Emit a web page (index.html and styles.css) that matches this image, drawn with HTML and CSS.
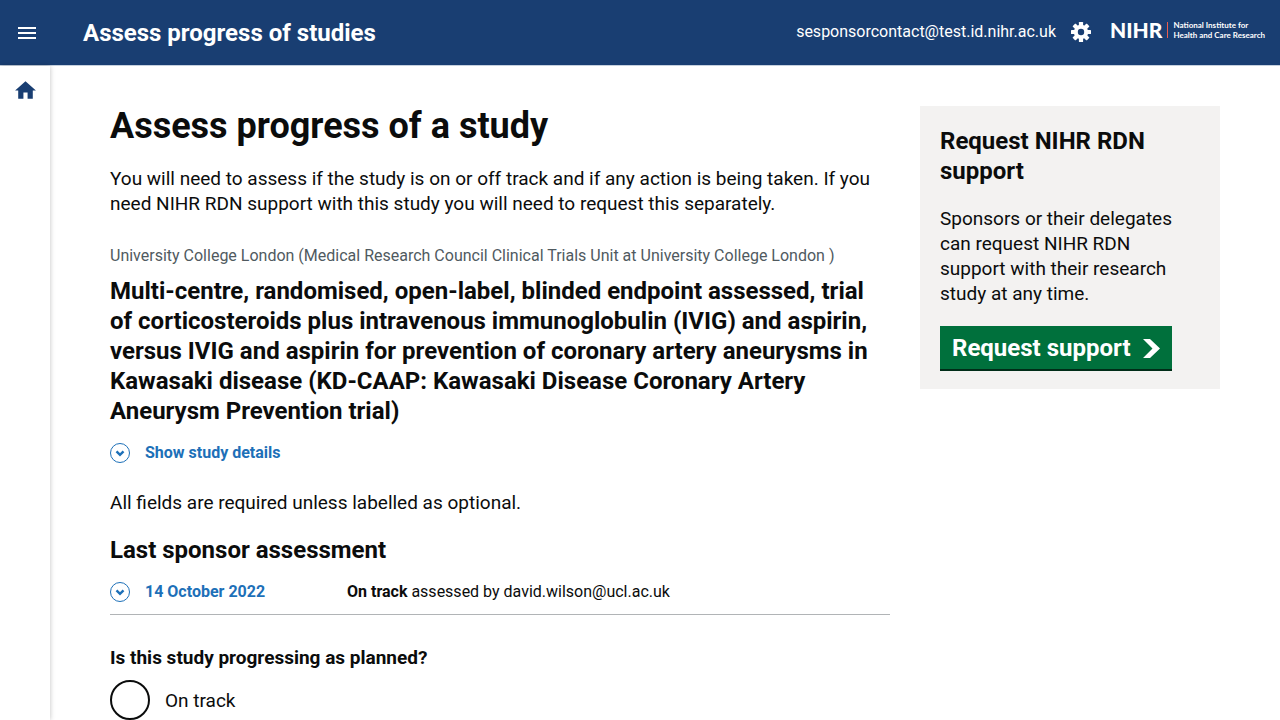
FILE: index.html
```html
<!DOCTYPE html>
<html lang="en">
<head>
<meta charset="utf-8">
<meta name="viewport" content="width=device-width, initial-scale=1">
<title>Assess progress of studies</title>
<link rel="stylesheet" href="styles.css">
</head>
<body>
<header class="header">
  <button class="menu-button" type="button" aria-label="Open menu">
    <svg width="18" height="12" viewBox="0 0 18 12" fill="currentColor"><path d="M0 0h18v2H0zM0 5h18v2H0zM0 10h18v2H0z"/></svg>
  </button>
  <div class="service-name">Assess progress of studies</div>
  <div class="account">
    <span class="account-email">sesponsorcontact@test.id.nihr.ac.uk</span>
    <button class="settings-button" type="button" aria-label="Settings">
      <svg width="20" height="20" viewBox="0 0 20 20"><g fill="currentColor"><circle cx="10" cy="10" r="7.2"/><rect x="7.900" y="0" width="4.200" height="20" rx=".6"/><rect x="7.900" y="0" width="4.200" height="20" rx=".6" transform="rotate(45 10 10)"/><rect x="7.900" y="0" width="4.200" height="20" rx=".6" transform="rotate(90 10 10)"/><rect x="7.900" y="0" width="4.200" height="20" rx=".6" transform="rotate(135 10 10)"/></g><circle class="gear-hole" cx="10" cy="10" r="3.200"/></svg>
    </button>
    <a class="logo" href="#" aria-label="National Institute for Health and Care Research">
      <span class="logo-mark">NIHR</span>
      <span class="logo-divider"></span>
      <span class="logo-name">National Institute for<br>Health and Care Research</span>
    </a>
  </div>
</header>
<div class="shell">
  <nav class="side-nav" aria-label="Main">
    <a class="home-link" href="#" aria-label="Home">
      <svg width="25" height="25" viewBox="0 0 24 24" fill="currentColor"><path d="M10 20v-6h4v6h5v-8h3L12 3 2 12h3v8z"/></svg>
    </a>
  </nav>
  <div class="page">
    <main class="main">
      <h1 class="title">Assess progress of a study</h1>
      <p class="intro">You will need to assess if the study is on or off track and if any action is being taken. If you need NIHR RDN support with this study you will need to request this separately.</p>
      <p class="organisation">University College London (Medical Research Council Clinical Trials Unit at University College London )</p>
      <h2 class="heading">Multi-centre, randomised, open-label, blinded endpoint assessed, trial of corticosteroids plus intravenous immunoglobulin (IVIG) and aspirin, versus IVIG and aspirin for prevention of coronary artery aneurysms in Kawasaki disease (KD-CAAP: Kawasaki Disease Coronary Artery Aneurysm Prevention trial)</h2>
      <button class="toggle details-toggle" type="button" aria-expanded="false">
        <svg class="toggle-icon" width="20" height="20" viewBox="0 0 20 20" fill="none" stroke="currentColor"><circle cx="10" cy="10" r="9.5"/><path d="M6.500 8.300 10 11.800l3.500-3.500" stroke-width="2.400"/></svg>
        Show study details
      </button>
      <p class="required-note">All fields are required unless labelled as optional.</p>
      <h3 class="heading">Last sponsor assessment</h3>
      <div class="assessment">
        <button class="toggle" type="button" aria-expanded="false">
          <svg class="toggle-icon" width="20" height="20" viewBox="0 0 20 20" fill="none" stroke="currentColor"><circle cx="10" cy="10" r="9.5"/><path d="M6.500 8.300 10 11.800l3.500-3.500" stroke-width="2.400"/></svg>
          14 October 2022
        </button>
        <div class="assessment-summary"><strong>On track</strong> assessed by david.wilson@ucl.ac.uk</div>
      </div>
      <fieldset class="fieldset">
        <legend class="legend">Is this study progressing as planned?</legend>
        <div class="radio-item">
          <input class="radio" type="radio" name="status" id="on-track">
          <label class="radio-label" for="on-track">On track</label>
        </div>
      </fieldset>
    </main>
    <aside class="support">
      <h2 class="heading">Request NIHR RDN support</h2>
      <p class="support-text">Sponsors or their delegates can request NIHR RDN support with their research study at any time.</p>
      <a class="support-button" href="#">Request support
        <svg width="17" height="19" viewBox="0 0 17 19" fill="currentColor"><path d="M0 0h7l10 9.500-10 9.500H0l9.500-9.500z"/></svg>
      </a>
    </aside>
  </div>
</div>
</body>
</html>
```
FILE: styles.css
```css
*, *::before, *::after { box-sizing: border-box; }

body {
  margin: 0;
  display: flex;
  flex-direction: column;
  min-height: 100vh;
  background: #fff;
  color: #0b0c0c;
  font-family: Roboto, Arial, sans-serif;
  font-size: 19px;
  line-height: 25px;
}

h1, h2, h3, p { margin: 0; }
button { padding: 0; border: 0; background: none; color: inherit; font: inherit; cursor: pointer; }
a { color: inherit; text-decoration: none; }
svg { display: block; flex: none; }

.header {
  display: flex;
  align-items: center;
  height: 65px;
  padding: 0 15px 0 18px;
  background: #193e72;
  color: #fff;
}
.service-name { margin-left: 47px; font-size: 24px; font-weight: 700; line-height: 30px; }
.account { display: flex; align-items: center; margin-left: auto; padding-bottom: 2px; font-size: 16px; line-height: 20px; }
.settings-button { margin-left: 15px; }
.gear-hole { fill: #193e72; }
.logo { display: flex; align-items: center; margin-left: 19px; padding-bottom: 3px; font-family: Lato, sans-serif; }
.logo-mark { font-size: 21px; font-weight: 900; line-height: 20px; }
.logo-divider { width: 1px; height: 16px; margin: 0 5px; background: #ea5d4e; }
.logo-name {
  font-size: 8px;
  font-weight: 700;
  line-height: 10px;
  white-space: nowrap;
}

.shell { display: flex; flex: 1; border-top: 1px solid #c5d0de; }
.side-nav {
  flex: none;
  width: 50px;
  padding: 12px 13px 0;
  box-shadow: 0 0 5px rgba(0, 0, 0, 0.25);
  color: #193e72;
}
.page {
  display: grid;
  flex: 1;
  grid-template-columns: minmax(0, 1fr) 300px;
  gap: 30px;
  align-items: start;
  padding: 40px 60px 0;
}

.title { font-size: 36px; font-weight: 700; line-height: 40px; }
.intro { margin-top: 20px; }
.organisation { margin: 30px 0 10px; color: #505a5f; font-size: 16px; line-height: 20px; }
.heading { font-size: 24px; font-weight: 700; line-height: 30px; }

.toggle {
  display: flex;
  align-items: center;
  gap: 15px;
  color: #1d70b8;
  font-size: 16px;
  font-weight: 700;
  line-height: 20px;
}
.details-toggle { margin-top: 17px; }
.required-note { margin: 27px 0 20px; }

.assessment {
  display: grid;
  grid-template-columns: 237px 1fr;
  align-items: center;
  margin-top: 17px;
  padding-bottom: 12px;
  border-bottom: 1px solid #b1b4b6;
  font-size: 16px;
  line-height: 20px;
}

.fieldset { margin: 30px 0 0; padding: 0; border: 0; min-width: 0; }
.legend { margin-bottom: 10px; padding: 0; font-weight: 700; }
.radio-item { display: flex; align-items: center; gap: 15px; }
.radio {
  appearance: none;
  width: 40px;
  height: 40px;
  margin: 0;
  border: 2px solid #0b0c0c;
  border-radius: 50%;
  background: #fff;
}
.radio:checked { background: radial-gradient(#0b0c0c 10px, #fff 11px); }

.support { padding: 20px; background: #f3f2f1; }
.support-text { margin: 20px 0; }
.support-button {
  display: flex;
  align-items: center;
  gap: 12px;
  width: fit-content;
  padding: 7px 12px 6px;
  box-shadow: 0 2px 0 #002d18;
  background: #00703c;
  color: #fff;
  font-size: 24px;
  font-weight: 700;
  line-height: 30px;
}
```
